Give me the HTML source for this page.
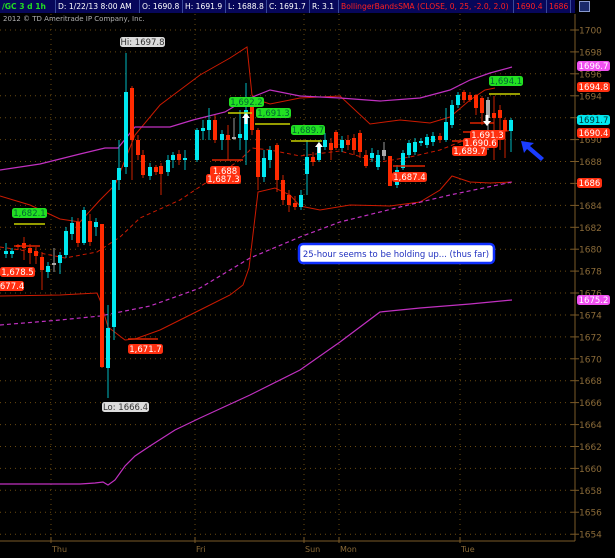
<!DOCTYPE html>
<html><head><meta charset="utf-8"><style>
body{margin:0;background:#000;width:615px;height:558px;overflow:hidden;font-family:"DejaVu Sans","Liberation Sans",sans-serif}
#hdr{position:absolute;left:0;top:0;width:575px;height:13px;background:#07075a;font-size:7.6px;line-height:13px;color:#fff}
#hdr span{position:absolute;top:0;height:13px;border-right:1px solid #3a4a9a;padding-left:2px;white-space:nowrap;overflow:hidden;box-sizing:border-box}
#copy{position:absolute;left:3px;top:15px;font-size:7px;color:#b0b0b0}
svg{position:absolute;left:0;top:0}
</style></head><body>
<svg id="s" width="615" height="558" xmlns="http://www.w3.org/2000/svg" font-family="DejaVu Sans, Liberation Sans, sans-serif"></svg>
<div id="hdr">
<span style="left:0;width:56px;color:#22dd22;font-weight:bold">/GC 3 d 1h</span>
<span style="left:56px;width:84px">D: 1/22/13 8:00 AM</span>
<span style="left:140px;width:43px">O: 1690.8</span>
<span style="left:183px;width:43px">H: 1691.9</span>
<span style="left:226px;width:41px">L: 1688.8</span>
<span style="left:267px;width:43px">C: 1691.7</span>
<span style="left:310px;width:29px">R: 3.1</span>
<span style="left:339px;width:175px;color:#ff2020">BollingerBandsSMA (CLOSE, 0, 25, -2.0, 2.0)</span>
<span style="left:514px;width:33px;color:#ff2020">1690.4</span>
<span style="left:547px;width:24px;color:#ff2020">1686</span>
</div>
<div style="position:absolute;left:579px;top:1px;width:11px;height:11px;background:#1a2a6a;border:1px solid #8899cc;box-sizing:border-box"></div>
<div id="copy">2012 © TD Ameritrade IP Company, Inc.</div>
<script>
var s=document.getElementById('s'),h='';
function Y(p){return 30+(1700-p)*10.96}
for(var p=1654;p<=1700;p+=2){var y=Y(p).toFixed(1);
h+='<line x1="0" y1="'+y+'" x2="575" y2="'+y+'" stroke="#6a4a10" stroke-dasharray="1,4"/>';
h+='<line x1="571" y1="'+y+'" x2="579" y2="'+y+'" stroke="#7a5a28"/>';
h+='<text x="579" y="'+(+y+3.5)+'" font-size="9" fill="#8a6a38">'+p+'</text>';}
[51,195,304,339,460].forEach(function(x){h+='<line x1="'+x+'" y1="14" x2="'+x+'" y2="541" stroke="#6a4a10" stroke-dasharray="1,4"/><line x1="'+x+'" y1="537" x2="'+x+'" y2="543" stroke="#7a5a28"/>';});
h+='<line x1="575" y1="14" x2="575" y2="541" stroke="#7a5a28"/><line x1="0" y1="541" x2="575" y2="541" stroke="#7a5a28"/>';
[['Thu',51],['Fri',195],['Sun',304],['Mon',339],['Tue',460]].forEach(function(d){h+='<text x="'+(d[1]+1)+'" y="552" font-size="8" fill="#8a6a38">'+d[0]+'</text>';});
function pl(pts,c,w,da){h+='<polyline fill="none" stroke="'+c+'" stroke-width="'+(w||1)+'" '+(da?'stroke-dasharray="'+da+'"':'')+' points="'+pts+'"/>';}
pl('0,196 30,205 60,219 80,222 100,200 115,185 135,135 160,105 200,75 230,58 247,47 252,95 258,100 270,104 300,98 340,96 370,124 400,120 430,123 450,117 470,100 485,90 495,88','#cc1a00');
pl('0,296 60,295 97,293 100,300 108,327 125,340 135,339 160,330 200,310 230,295 243,285 249,268 258,192 275,188 290,195 300,206 320,210 350,205 390,206 420,202 440,190 452,176 470,182 490,183 512,182','#cc1a00');
pl('0,247 40,253 65,258 97,252 120,237 140,218 180,200 210,180 240,160 252,148 270,150 300,156 340,151 380,162 410,157 440,150 460,142 480,137 512,130','#cc1a00',1,'4,3');
pl('0,170 40,164 80,154 105,148 118,148 135,127 170,127 193,120 225,112 245,100 270,90 300,96 340,98 380,101 420,98 450,90 470,80 490,73 512,67','#c030c0',1.2);
pl('0,325 60,320 100,316 150,306 200,288 250,258 300,237 340,222 400,207 450,195 512,182','#c030c0',1.2,'4,3');
pl('0,484 80,484 95,483 103,482 108,485 115,480 125,466 135,456 150,446 175,430 200,418 250,395 300,370 340,342 380,312 420,308 470,304 512,300','#c030c0',1.2);
var C=[[6,251,254,243,258,'c'],[12,251,254,248,258,'c'],[18,245,247,244,250,'r'],[24,243,248,237,260,'r'],[30,248,253,244,264,'r'],[36,251,256,247,264,'r'],[42,257,270,252,290,'r'],[48,266,272,262,278,'c'],[54,263,265,248,272,'g'],[60,255,263,252,274,'c'],[66,231,255,227,258,'c'],[72,223,234,217,240,'c'],[78,222,243,218,247,'r'],[84,210,243,207,245,'c'],[90,221,242,214,246,'r'],[96,222,227,218,236,'c'],[102,224,367,224,368,'r'],[108,328,368,305,398,'c'],[114,180,327,180,340,'c'],[119,168,180,140,190,'c'],[126,92,167,53,174,'c'],[132,88,140,86,180,'r'],[138,140,155,135,160,'r'],[143,155,175,150,178,'r'],[150,167,176,163,180,'c'],[156,167,172,165,175,'r'],[161,166,174,163,195,'r'],[168,160,172,155,176,'c'],[173,155,160,152,168,'c'],[179,154,160,150,165,'r'],[185,158,160,150,170,'c'],[197,130,160,128,162,'c'],[203,128,131,120,140,'c'],[209,120,130,108,140,'c'],[215,120,140,115,143,'r'],[222,134,140,130,150,'c'],[228,135,140,125,160,'r'],[234,137,139,118,140,'g'],[240,134,138,110,150,'c'],[246,110,140,83,165,'c'],[252,105,130,100,135,'r'],[258,130,177,128,190,'r'],[264,158,177,150,182,'c'],[270,150,160,146,168,'c'],[277,145,180,143,192,'r'],[283,180,200,175,205,'r'],[289,195,205,190,212,'r'],[295,203,207,196,210,'r'],[301,195,207,190,210,'c'],[307,157,174,140,195,'c'],[313,157,162,152,166,'r'],[319,145,160,140,162,'c'],[325,140,147,133,150,'c'],[331,143,150,138,160,'r'],[336,132,148,130,150,'r'],[342,140,148,136,152,'c'],[348,140,145,135,150,'r'],[354,138,150,134,155,'r'],[360,133,152,130,158,'r'],[366,155,166,150,168,'r'],[372,153,158,148,162,'c'],[378,155,167,150,170,'c'],[384,150,156,142,160,'g'],[390,156,186,156,186,'r'],[397,170,185,165,188,'c'],[403,153,168,150,170,'c'],[409,143,155,140,158,'c'],[415,142,152,138,155,'c'],[421,141,143,138,146,'c'],[427,137,145,134,148,'c'],[433,136,142,132,146,'c'],[440,136,140,133,143,'r'],[446,122,140,108,142,'c'],[452,105,125,100,128,'c'],[458,95,105,92,108,'c'],[464,92,100,90,103,'r'],[470,95,100,92,102,'r'],[476,95,108,94,115,'r'],[482,98,113,96,125,'r'],[488,100,118,97,150,'g'],[494,113,118,96,160,'r'],[500,110,118,105,150,'r'],[505,120,131,118,158,'r'],[511,120,131,118,152,'c']];
C.forEach(function(c){var col=c[5]=='c'?'#00e8f0':c[5]=='r'?'#ff2a00':'#aaaaaa';var wc=c[5]=='c'?'#00b8c0':c[5]=='r'?'#cc2200':'#999';
h+='<line x1="'+c[0]+'" y1="'+c[3]+'" x2="'+c[0]+'" y2="'+c[4]+'" stroke="'+wc+'"/>';
h+='<rect x="'+(c[0]-2)+'" y="'+c[1]+'" width="4" height="'+Math.max(1,c[2]-c[1])+'" fill="'+col+'"/>';});
function ln(x1,y,x2,c){h+='<line x1="'+x1+'" y1="'+y+'" x2="'+x2+'" y2="'+y+'" stroke="'+c+'" stroke-width="1.5"/>';}
ln(14,224,45,'#c8d000');ln(228,113,252,'#c8d000');ln(255,124,290,'#c8d000');ln(291,141,322,'#c8d000');ln(489,94,520,'#c8d000');
ln(212,160,243,'#dd2200');ln(128,339,158,'#dd2200');ln(393,166,425,'#dd2200');ln(470,123,494,'#dd2200');ln(463,132,485,'#dd2200');ln(452,141,475,'#dd2200');
ln(14,246,40,'#dd2200');
function lb(x,y,w,t,bg,fg){h+='<rect x="'+x+'" y="'+y+'" width="'+w+'" height="10" rx="2.5" fill="'+bg+'"/><text x="'+(x+w/2)+'" y="'+(y+8)+'" font-size="8.5" text-anchor="middle" fill="'+fg+'">'+t+'</text>';}
var G='#22e022',R='#ff3010';
lb(12,208,35,'1,682.1',G,'#063');lb(229,97,35,'1,692.2',G,'#063');lb(256,108,35,'1,691.3',G,'#063');lb(291,125,34,'1,689.7',G,'#063');lb(489,76,34,'1,694.1',G,'#063');
lb(0,267,35,'1,678.5',R,'#fff');lb(-8,281,32,'1,677.4',R,'#fff');lb(128,344,35,'1,671.7',R,'#fff');lb(210,166,30,'1,688',R,'#fff');lb(206,174,35,'1,687.3',R,'#fff');
lb(392,172,35,'1,687.4',R,'#fff');lb(470,130,35,'1,691.3',R,'#fff');lb(463,138,35,'1,690.6',R,'#fff');lb(452,146,35,'1,689.7',R,'#fff');
lb(120,37,45,'Hi: 1697.8','#dcdcdc','#333');lb(102,402,47,'Lo: 1666.4','#dcdcdc','#333');
lb(577,61,33,'1696.7','#f050f0','#fff');lb(577,82,33,'1694.8',R,'#fff');lb(577,115,33,'1691.7','#00e8f0','#033');lb(577,128,33,'1690.4',R,'#fff');lb(577,178,25,'1686',R,'#fff');lb(577,295,33,'1675.2','#f050f0','#fff');
function ar(x,y,up){var d=up?'M'+x+' '+y+' l-4 5 h2.5 v6 h3 v-6 h2.5z':'M'+x+' '+y+' l-4 -5 h2.5 v-6 h3 v6 h2.5z';h+='<path d="'+d+'" fill="#fff"/>';}
ar(246,113,1);ar(319,142,1);ar(487,126,0);
h+='<path d="M521 141 l13 2 -4 3 14 12 -3 3 -14 -12 -3 4z" fill="#1a3cff"/>';
h+='<rect x="299" y="244" width="195" height="19" rx="4" fill="#fff" stroke="#1030ff" stroke-width="2.5"/><text x="396" y="257" font-size="8.5" text-anchor="middle" fill="#2030c0">25-hour seems to be holding up... (thus far)</text>';
s.innerHTML=h;
</script>
</body></html>
